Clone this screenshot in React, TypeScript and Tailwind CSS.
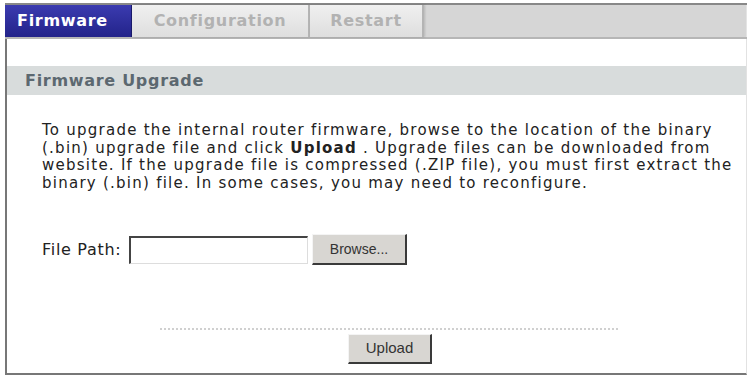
import React from 'react';

const verdana = { fontFamily: '"DejaVu Sans", Verdana, sans-serif' };
const arial = { fontFamily: '"Liberation Sans", Arial, sans-serif' };

const Tab: React.FC<{ label: string; active?: boolean; width: string }> = ({ label, active, width }) => {
    if (active) {
        return (
            <div className={`${width} h-full flex items-center pl-[12px] bg-gradient-to-b from-[#3b3bb0] to-[#23238a] border-r border-[#1a1a6a]`}>
                <span className="text-white font-bold text-[16px] tracking-[0.7px] leading-none">{label}</span>
            </div>
        );
    }
    return (
        <div className={`${width} h-full flex items-center justify-center bg-gradient-to-b from-[#f0f0f0] to-[#dedede] border-r-2 border-[#b4b4b4] shadow-[1px_0_2px_rgba(0,0,0,0.15)]`}>
            <span className="text-[#b2b2b2] font-bold text-[16px] tracking-[0.7px] leading-none">{label}</span>
        </div>
    );
};

export default function App() {
    return (
        <div className="w-[748px] h-[376px] bg-white pt-[3px] pl-[5px] pr-[1px] pb-[1px] flex flex-col" style={verdana}>
            {/* tab bar */}
            <div className="h-[36px] shrink-0 flex bg-[#d6d6d6] border-t-2 border-[#888888] border-b-2 border-b-[#b6b6b6]">
                <Tab label="Firmware" active width="w-[127px]" />
                <Tab label="Configuration" width="w-[178px]" />
                <Tab label="Restart" width="w-[114px]" />
                <div className="flex-1 border-r border-[#e4e4e4]" />
            </div>

            {/* body */}
            <div className="flex-1 flex flex-col border-l-2 border-b-2 border-[#777777] border-r border-r-[#e2e2e2] pt-[27px]">
                <div className="h-[29px] bg-[#d8dcdc] flex items-center pl-[18px]">
                    <span className="text-[#5c6870] font-bold text-[16px] tracking-[0.7px] leading-none">Firmware Upgrade</span>
                </div>

                <p className="mt-[27px] ml-[35px] mr-[10px] text-[15px] tracking-[1.25px] leading-[17.5px] text-[#222222] whitespace-nowrap">
                    To upgrade the internal router firmware, browse to the location of the binary<br />
                    (.bin) upgrade file and click <b>Upload</b> . Upgrade files can be downloaded from<br />
                    website. If the upgrade file is compressed (.ZIP file), you must first extract the<br />
                    binary (.bin) file. In some cases, you may need to reconfigure.
                </p>

                <div className="mt-[42px] ml-[35px] flex items-center">
                    <span className="text-[16px] tracking-[0.7px] text-[#222222] w-[87px]">File Path:</span>
                    <div className="w-[179px] h-[28px] bg-white border-t-2 border-l-2 border-[#444444] border-b border-r border-b-[#dddddd] border-r-[#dddddd]" />
                    <button
                        className="ml-[4px] w-[95px] h-[31px] bg-[#d8d6d2] border-t border-l border-[#f4f4f4] border-b-2 border-r-2 border-b-[#3a3a3a] border-r-[#3a3a3a] text-[14px] text-[#333333]"
                        style={arial}
                    >
                        Browse...
                    </button>
                </div>

                <div className="mt-[63px] ml-[153px] w-[458px] border-t-2 border-dotted border-[#d0d0d0]" />

                <div className="mt-[4px] ml-[341px]">
                    <button
                        className="w-[84px] h-[30px] bg-[#d8d6d2] border-t border-l border-[#f4f4f4] border-b-2 border-r-2 border-b-[#3a3a3a] border-r-[#3a3a3a] text-[15px] text-[#333333]"
                        style={arial}
                    >
                        Upload
                    </button>
                </div>
            </div>
        </div>
    );
}
